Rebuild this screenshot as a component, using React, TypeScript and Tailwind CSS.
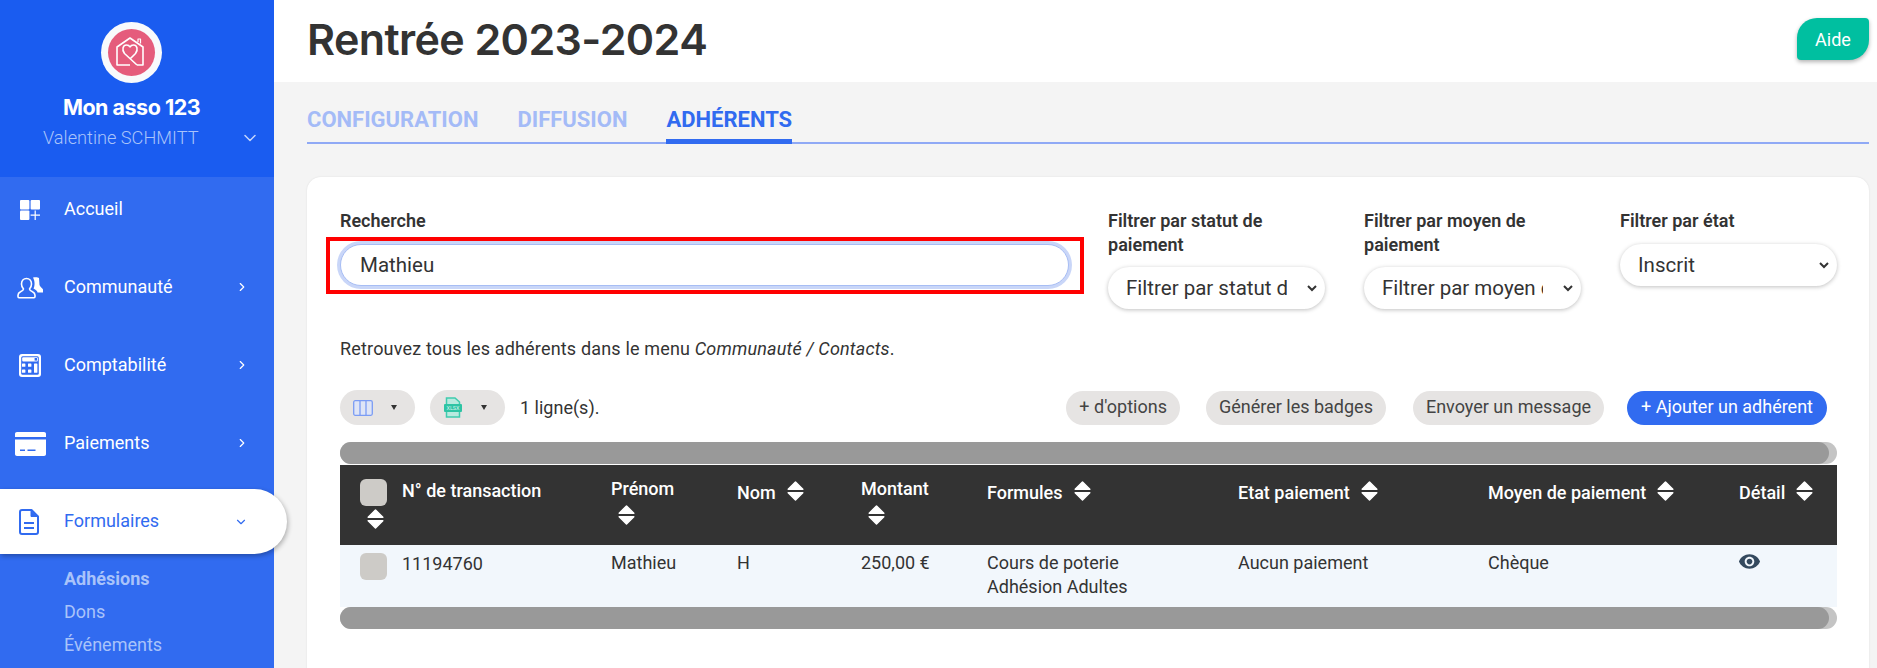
import type { ReactNode } from 'react'
import { ChevronDown, ChevronRight } from 'lucide-react'
import { MdVisibility } from 'react-icons/md'

function LogoIcon() {
  return (
    <svg width="47" height="47" viewBox="0 0 47 47" fill="none" stroke="white" strokeWidth="1.6" strokeLinejoin="round">
      <path d="M22 36 H9 V18 L22 9 L35 18 V36 H29" />
      <path d="M30 13 V10 H32.5 V14.6" strokeWidth="1.2" />
      <path d="M29 36 L16.5 24.5 C13.5 20.5 15 16 18.5 16 C20.5 16 21.5 17 22 18 C22.5 17 23.5 16 25.5 16 C29 16 30.5 20.5 27.5 24.5 L22 30" />
    </svg>
  )
}

function HomeIcon() {
  return (
    <svg width="20" height="20" viewBox="0 0 20 20" fill="white">
      <rect x="0" y="0" width="9.4" height="9.4" rx="1" />
      <rect x="10.6" y="0" width="9.4" height="9.4" rx="1" />
      <rect x="0" y="10.6" width="9.4" height="9.4" rx="1" />
      <path d="M15.2 10.6 V20 M10.6 15.2 H20" stroke="white" strokeWidth="1.2" fill="none" />
    </svg>
  )
}

function CommunityIcon() {
  return (
    <svg width="27" height="22" viewBox="0 0 27 22">
      <path d="M16 0.5 C18 0 21 0 22 1 L22.5 8 C23 10 25.5 11 26 12.5 L26 15.5 L20.5 15.5 C20.5 13.5 18 12.5 16.5 11.5 C18 9 18 4 16 0.5 Z" fill="white" />
      <path
        d="M9.5 1.5 C6.5 1.5 4.5 4 4.5 7 C4.5 9 5.5 11 6.5 12 C6.5 13.2 5.5 13.8 3.5 14.8 C2 15.5 1 16.8 1 18.3 V19.5 C1 20.2 1.4 20.7 2 20.7 H17 C17.6 20.7 18 20.2 18 19.5 V18.3 C18 16.8 17 15.5 15.5 14.8 C13.5 13.8 12.5 13.2 12.5 12 C13.5 11 14.5 9 14.5 7 C14.5 4 12.5 1.5 9.5 1.5 Z"
        fill="none"
        stroke="white"
        strokeWidth="1.6"
      />
    </svg>
  )
}

function CalculatorIcon() {
  return (
    <svg width="22" height="23" viewBox="0 0 22 23">
      <rect x="0" y="0" width="22" height="23" rx="3" fill="white" />
      <rect x="2.2" y="2.2" width="17.6" height="18.6" rx="1.5" fill="#316bf0" />
      <rect x="3.2" y="3.2" width="15.6" height="4.4" rx="1" fill="white" />
      <rect x="15.6" y="4" width="2.4" height="2.6" fill="#316bf0" />
      <rect x="3" y="9.4" width="3.4" height="3.4" rx="0.6" fill="white" />
      <rect x="9" y="9.4" width="3.4" height="3.4" rx="0.6" fill="white" />
      <rect x="3" y="15.4" width="3.4" height="3.4" rx="0.6" fill="white" />
      <rect x="9" y="15.4" width="3.4" height="3.4" rx="0.6" fill="white" />
      <rect x="15" y="9.4" width="3.4" height="9.4" rx="0.6" fill="white" />
    </svg>
  )
}

function CardIcon() {
  return (
    <svg width="31" height="24" viewBox="0 0 31 24">
      <path d="M2 0 H29 C30.2 0 31 .8 31 2 V5 H0 V2 C0 .8 .8 0 2 0 Z" fill="white" />
      <path d="M0 7.6 H31 V22 C31 23.2 30.2 24 29 24 H2 C.8 24 0 23.2 0 22 Z" fill="white" />
      <path d="M5 18.2 H10 M12.5 18.2 H20.5" stroke="#316bf0" strokeWidth="1.4" />
    </svg>
  )
}

function DocIcon() {
  return (
    <svg width="20" height="26" viewBox="0 0 20 26" fill="none" stroke="#316bf0" strokeWidth="2" strokeLinejoin="round">
      <path d="M3 1 H12.5 L19 7.5 V23 C19 24.2 18.2 25 17 25 H3 C1.8 25 1 24.2 1 23 V3 C1 1.8 1.8 1 3 1 Z" />
      <path d="M12 1.5 V7.5 H18.5" fill="#316bf0" strokeWidth="1" />
      <path d="M5 14 H15 M5 19 H15" strokeWidth="2" />
    </svg>
  )
}

function ColumnsIcon() {
  return (
    <svg width="20" height="16" viewBox="0 0 20 16" fill="#dfe5f6" stroke="#7b9cf4" strokeWidth="1.3">
      <rect x="0.7" y="0.7" width="18.6" height="14.6" rx="1.5" />
      <path d="M7 0.7 V15.3 M13 0.7 V15.3" />
    </svg>
  )
}

function XlsxIcon() {
  return (
    <svg width="18" height="21" viewBox="0 0 18 21" fill="none">
      <path d="M2.5 7 V1 H11 L15.5 5 V7 M2.5 15 V20 H15.5 V15" stroke="#3fcbae" strokeWidth="1.5" fill="#b9eadf" />
      <rect x="0" y="7" width="18" height="8" rx="1" fill="#2ec4a4" />
      <text x="9" y="13" textAnchor="middle" fontSize="5.5" fill="#d8f3ec" fontFamily="Roboto, sans-serif">
        XLSX
      </text>
    </svg>
  )
}

function Caret() {
  return (
    <svg width="6" height="5" viewBox="0 0 6 5">
      <path d="M0 0 H6 L3 5 Z" fill="#333333" />
    </svg>
  )
}

function SortIcon() {
  return (
    <svg className="shrink-0" width="17" height="20" viewBox="0 0 17 20" fill="white" stroke="white" strokeWidth="1.5" strokeLinejoin="round">
      <path d="M8.5 1 L15.8 8.2 H1.2 Z" />
      <path d="M1.2 11.8 H15.8 L8.5 19 Z" />
    </svg>
  )
}

function NavItem({ icon, label, chevron }: { icon: ReactNode; label: string; chevron?: boolean }) {
  return (
    <div className="flex h-[65px] w-[274px] items-center text-[18px] text-white">
      <div className="mr-[4px] flex w-[60px] justify-center">{icon}</div>
      <span className="-mt-[2px]">{label}</span>
      {chevron && <ChevronRight className="ml-auto mr-[25px] -mt-[2px] text-white" size={14} strokeWidth={2} />}
    </div>
  )
}

function Filter({ label, value, top }: { label: ReactNode; value: string; top: string }) {
  return (
    <div className="w-[217px] shrink-0">
      <div className={`text-[18px] leading-[23.5px] font-semibold text-[#333] ${top}`}>{label}</div>
      <select
        defaultValue={value}
        className="h-[42px] w-full rounded-full border-r-[5px] border-transparent bg-white pr-[17px] pl-[14px] text-[20.5px] text-[#333] shadow-[0_1px_4px_rgba(0,0,0,0.25)] outline-none"
      >
        <option>{value}</option>
      </select>
    </div>
  )
}

function ToolButton({ children, primary, className }: { children: ReactNode; primary?: boolean; className?: string }) {
  return (
    <button
      type="button"
      className={`h-[34px] rounded-full pb-[2px] text-[18px] ${primary ? 'bg-[#316bf0] px-[14px] text-white' : 'bg-[#e6e4e3] px-[13px] text-[#444]'} ${className ?? ''}`}
    >
      {children}
    </button>
  )
}

function ScrollBar() {
  return (
    <div className="h-[22px] w-full rounded-full bg-[#c4c4c4]">
      <div className="h-full w-[1489px] rounded-full bg-[#999999]" />
    </div>
  )
}

const columns = 'grid grid-cols-[62px_209px_126px_124px_126px_251px_250px_251px_98px]'

function HeadCell({ label }: { label: string }) {
  return (
    <div className="flex items-start gap-[11px] pt-[16px]">
      <span>{label}</span>
      <SortIcon />
    </div>
  )
}

function StackedHeadCell({ label }: { label: string }) {
  return (
    <div className="pt-[12px]">
      <div>{label}</div>
      <div className="mt-[4px] pl-[7px]">
        <SortIcon />
      </div>
    </div>
  )
}

export default function App() {
  return (
    <div className="flex h-[668px] overflow-hidden bg-[#f4f4f4] font-['Roboto',sans-serif] text-[#333]">
      <aside className="relative z-10 w-[274px] shrink-0 bg-[#316bf0]">
        <div className="flex h-[177px] flex-col items-center bg-[#1a5cf0] pt-[22px]">
          <div className="mr-[11px] flex h-[61px] w-[61px] items-center justify-center rounded-full bg-[#f8fafc]">
            <div className="flex h-[47px] w-[47px] items-center justify-center rounded-full bg-[#e55c7c]">
              <LogoIcon />
            </div>
          </div>
          <div className="mt-[10px] mr-[11px] font-['Inter',sans-serif] text-[21.5px] leading-[28px] font-bold tracking-[-0.5px] text-white">
            Mon asso 123
          </div>
          <div className="mt-[3px] flex w-full items-center pl-[43px] text-[18.2px] leading-[28px] font-light text-[#a9c3fa]">
            <span>Valentine SCHMITT</span>
            <ChevronDown className="ml-auto mr-[14px] text-[#c4d5fb]" size={20} strokeWidth={1.8} />
          </div>
        </div>

        <nav className="flex flex-col gap-[13px]">
          <NavItem icon={<HomeIcon />} label="Accueil" />
          <NavItem icon={<CommunityIcon />} label="Communauté" chevron />
          <NavItem icon={<CalculatorIcon />} label="Comptabilité" chevron />
          <NavItem icon={<CardIcon />} label="Paiements" chevron />
          <div className="flex h-[65px] w-[287px] items-center rounded-r-[33px] bg-white text-[18px] text-[#316bf0] shadow-[1px_2px_5px_rgba(0,0,0,0.3)]">
            <div className="mr-[4px] flex w-[58px] justify-center">
              <DocIcon />
            </div>
            <span className="-mt-[2px] ml-[2px]">Formulaires</span>
            <ChevronDown className="ml-auto mr-[39px]" size={14} strokeWidth={2} />
          </div>
        </nav>
        <div className="mt-[8px] pl-[64px] text-[18px] leading-[33px] text-[#a9c3fa]">
          <div className="font-bold">Adhésions</div>
          <div>Dons</div>
          <div>Événements</div>
        </div>
      </aside>

      <main className="min-w-0 flex-1">
        <header className="flex h-[82px] items-start justify-between bg-white pr-[8px] pl-[33px]">
          <h1 className="mt-[13px] font-['Inter',sans-serif] text-[43px] leading-[52px] font-semibold tracking-[-0.6px] text-[#333]">
            Rentrée 2023-2024
          </h1>
          <button
            type="button"
            className="mt-[18px] h-[42px] w-[72px] rounded-[20px_4px_20px_4px] bg-[#00bfa0] text-[18px] text-white shadow-[0_2px_4px_rgba(0,0,0,0.3)]"
          >
            Aide
          </button>
        </header>

        <div className="pr-[8px] pl-[33px]">
          <div className="flex h-[62px] gap-[39px] border-b-2 border-[#8fa9f5] text-[22px] leading-[24px] font-bold uppercase text-[#a4bbf7]">
            <div className="pt-[26px]">Configuration</div>
            <div className="pt-[26px]">Diffusion</div>
            <div className="-mb-[2px] border-b-[5px] border-[#316bf0] pt-[26px] text-[#316bf0]">Adhérents</div>
          </div>

          <section className="mt-[33px] h-[600px] rounded-[14px] bg-white pt-[32px] pr-[32px] pl-[33px] shadow-[0_0_2px_rgba(0,0,0,0.1)]">
            <div className="flex gap-[39px]">
              <div className="w-[729px] shrink-0">
                <label className="mb-[11px] block text-[18px] leading-[24px] font-semibold text-[#333]">Recherche</label>
                <div className="relative">
                  <input
                    defaultValue="Mathieu"
                    className="h-[42px] w-full rounded-full border border-[#a7bdf4] bg-white pl-[19px] text-[20.5px] text-[#333] shadow-[0_0_0_3px_#c9d6f8] outline-none"
                  />
                  <div className="pointer-events-none absolute -top-[7px] -right-[15px] -left-[14px] h-[57px] border-[4px] border-[#ff0000]" />
                </div>
              </div>
              <Filter top="mb-[11px]" label={<>Filtrer par statut de<br />paiement</>} value="Filtrer par statut de paiement" />
              <Filter top="mb-[11px]" label={<>Filtrer par moyen de<br />paiement</>} value="Filtrer par moyen de paiement" />
              <Filter top="mb-[11.5px]" label="Filtrer par état" value="Inscrit" />
            </div>

            <p className="pt-[28px] text-[18px] leading-[24px] tracking-[0.17px] text-[#333]">
              Retrouvez tous les adhérents dans le menu <em>Communauté / Contacts</em>.
            </p>

            <div className="mt-[29px] flex items-center">
              <div className="flex h-[35px] w-[75px] items-center rounded-full bg-[#e6e4e3] pl-[13px]">
                <ColumnsIcon />
                <span className="ml-[18px] flex">
                  <Caret />
                </span>
              </div>
              <div className="ml-[15px] flex h-[35px] w-[75px] items-center rounded-full bg-[#e6e4e3] pl-[14px]">
                <XlsxIcon />
                <span className="ml-[19px] flex">
                  <Caret />
                </span>
              </div>
              <span className="ml-[15px] text-[18px]">1 ligne(s).</span>
              <div className="ml-auto flex items-center pr-[10px]">
                <ToolButton className="mr-[26px]">+ d'options</ToolButton>
                <ToolButton className="mr-[27px]">Générer les badges</ToolButton>
                <ToolButton className="mr-[23px]">Envoyer un message</ToolButton>
                <ToolButton primary>+ Ajouter un adhérent</ToolButton>
              </div>
            </div>

            <div className="mt-[17px]">
              <ScrollBar />
              <div className={`${columns} mt-[1px] h-[80px] bg-[#333333] text-[18px] leading-[24px] font-medium text-white`}>
                <div className="pt-[14px] pl-[20px]">
                  <div className="h-[27px] w-[27px] rounded-[6px] bg-[#cdcbc7]" />
                  <div className="mt-[3px] pl-[7px]">
                    <SortIcon />
                  </div>
                </div>
                <div className="pt-[14px]">N° de transaction</div>
                <StackedHeadCell label="Prénom" />
                <HeadCell label="Nom" />
                <StackedHeadCell label="Montant" />
                <HeadCell label="Formules" />
                <HeadCell label="Etat paiement" />
                <HeadCell label="Moyen de paiement" />
                <HeadCell label="Détail" />
              </div>
              <div className={`${columns} h-[62px] bg-[#f2f7fc] text-[18px] leading-[24px] text-[#333]`}>
                <div className="pt-[8px] pl-[20px]">
                  <div className="h-[27px] w-[27px] rounded-[6px] bg-[#cdcbc7]" />
                </div>
                <div className="pt-[7px]">11194760</div>
                <div className="pt-[6px]">Mathieu</div>
                <div className="pt-[6px]">H</div>
                <div className="pt-[6px]">250,00 €</div>
                <div className="pt-[6px]">
                  Cours de poterie
                  <br />
                  Adhésion Adultes
                </div>
                <div className="pt-[6px]">Aucun paiement</div>
                <div className="pt-[6px]">Chèque</div>
                <div className="pt-[5px]">
                  <MdVisibility className="-ml-[1px] text-[#34495e]" size={23} />
                </div>
              </div>
              <ScrollBar />
            </div>
          </section>
        </div>
      </main>
    </div>
  )
}
